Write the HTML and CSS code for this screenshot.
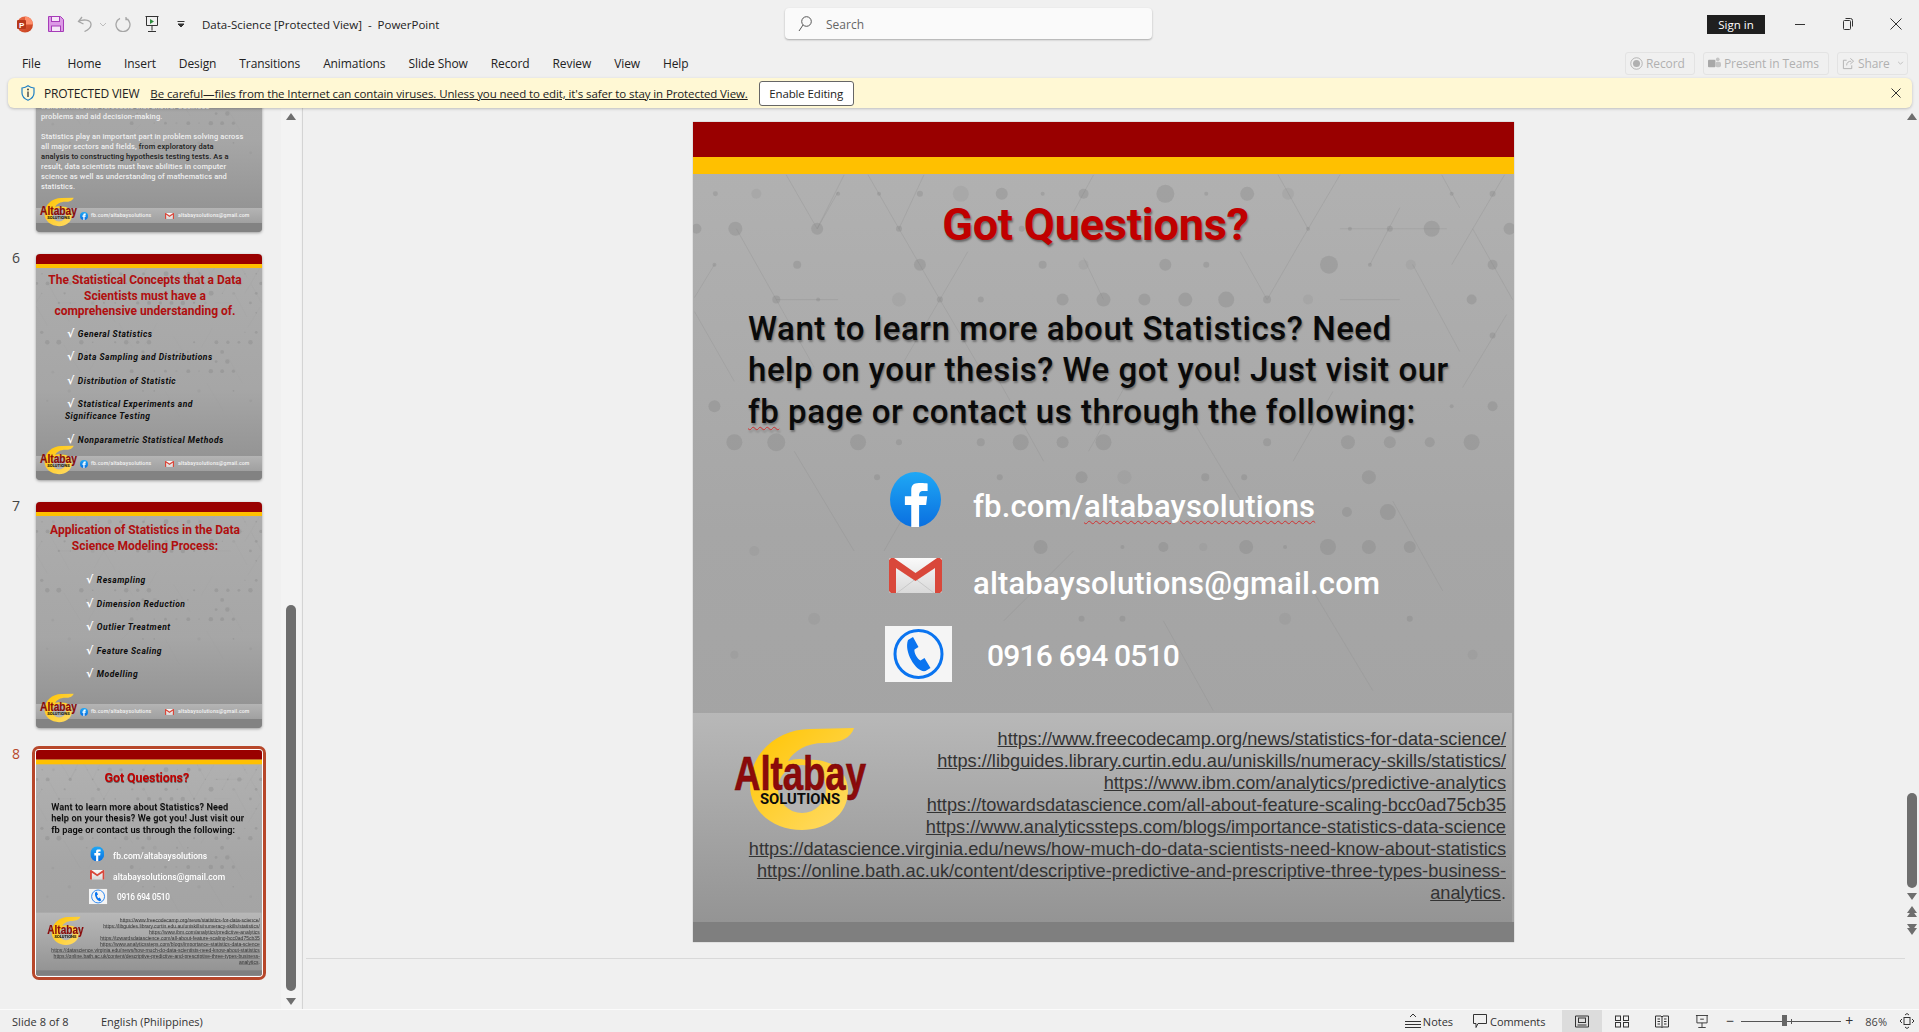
FILE: index.html
```
<!DOCTYPE html>
<html lang="en">
<head>
<meta charset="utf-8">
<title>Data-Science [Protected View] - PowerPoint</title>
<link rel="stylesheet" href="styles.css">
</head>
<body>
<svg class="defs" width="0" height="0" aria-hidden="true">
  <defs>
    <linearGradient id="fbg" x1="0" y1="0" x2="0" y2="1"><stop offset="0" stop-color="#1fa8f5"/><stop offset="1" stop-color="#0a6fe0"/></linearGradient>
    <linearGradient id="yg" x1="0" y1="0" x2="1" y2="1"><stop offset="0" stop-color="#ffc400"/><stop offset="1" stop-color="#ffdc6a"/></linearGradient>
    <linearGradient id="mailg" x1="0" y1="0" x2="0" y2="1"><stop offset="0" stop-color="#fafafa"/><stop offset="1" stop-color="#d9d9d9"/></linearGradient>
    <linearGradient id="ppg" x1="0" y1="0" x2="1" y2="1"><stop offset="0" stop-color="#ed6c47"/><stop offset="1" stop-color="#c43e1c"/></linearGradient>
    <symbol id="i-fb" viewBox="0 0 24 24" preserveAspectRatio="none">
      <circle cx="12" cy="12" r="12" fill="url(#fbg)"/>
      <path fill="#fff" d="M10 24V14.4H7v-3.8h3V8c0-3 1.9-3.2 4.5-3.2 1.3 0 2.4.1 3.2.2v3.3h-2c-1.6 0-2 .8-2 2v.3h3.8l-.5 3.8h-3.3V24z"/>
    </symbol>
    <symbol id="i-mail" viewBox="0 0 53 35" preserveAspectRatio="none">
      <rect width="53" height="35" rx="2" fill="url(#mailg)"/>
      <path d="M8 35 26.5 21 45 35" fill="none" stroke="#c8c8c8"/>
      <path fill="#d9483b" d="M0 2 2 0h3l21.500 15L48 0h3l2 2v31l-2 2h-5V10L26.500 23 7 10v25H2l-2-2z"/>
    </symbol>
    <symbol id="i-phone" viewBox="0 0 67 56">
      <rect width="67" height="56" fill="#f5f5f5"/>
      <circle cx="33.500" cy="28" r="23.500" fill="none" stroke="#0a74f0" stroke-width="3"/>
      <path fill="#0a74f0" d="M23 14l5-3 5.500 10-4 2.500c-.8 3 3 10 6 11l4-2.500 6 10-5 3c-9 2-22-19-17.500-31z"/>
    </symbol>
    <symbol id="i-logo" viewBox="0 0 160 125">
      <path fill="url(#yg)" d="M134 13c-3 10-14 15-30 15-18 0-30 8-36 18 6-2 12-3 18-1 24-2 42 10 42 31 0 24-22 39-46 39-28 0-52-18-52-45C30 38 58 14 90 14z"/>
      <ellipse cx="82" cy="74" rx="24" ry="24" fill="#b3b3b3"/>
      <text class="logo-word" x="14" y="75" textLength="132" lengthAdjust="spacingAndGlyphs">Altabay</text>
      <text class="logo-sub" x="40" y="89" textLength="80" lengthAdjust="spacingAndGlyphs">SOLUTIONS</text>
    </symbol>
    <symbol id="i-net" viewBox="0 0 820 600">
      <g class="net-lines">
        <path d="M92 53 123 107M150 53 123 107M174 53 205 107 246 178 287 248M230 53 205 107M42 107 82 178 120 246M274 130 246 178 210 240M82 178H144M144 70 123 107M390 136 410 178M400 53 380 90M585 53 615 107M647 53 604 126 574 178 547 130M749 53 767 86M812 53 759 143M720 143 767 230M647 107H754M647 178H707M677 143 707 86M780 107 820 178M814 193 770 266M0 190 40 260M20 143 0 176"/>
        <path d="M300 250 350 340M440 250 395 330M500 300 560 400M640 270 600 340M700 380 750 470M100 330 160 430M230 360 190 430M310 500 380 430M470 500 520 590M620 470 680 570"/>
      </g>
      <g class="net-dots">
        <circle cx="21" cy="72" r="2.500"/><circle cx="62" cy="72" r="5" opacity=".5"/><circle cx="144" cy="72" r="2"/><circle cx="185" cy="72" r="2"/><circle cx="226" cy="72" r="3"/><circle cx="267" cy="72" r="8" opacity=".5"/><circle cx="308" cy="72" r="6"/><circle cx="349" cy="72" r="2"/><circle cx="390" cy="72" r="5"/><circle cx="472" cy="72" r="9"/><circle cx="513" cy="72" r="2"/><circle cx="554" cy="72" r="7"/><circle cx="595" cy="72" r="6" opacity=".5"/><circle cx="759" cy="72" r="2"/><circle cx="800" cy="72" r="3"/>
        <circle cx="2" cy="107" r="5"/><circle cx="41" cy="107" r="7"/><circle cx="123" cy="107" r="6"/><circle cx="205" cy="107" r="3"/><circle cx="328" cy="107" r="3"/><circle cx="615" cy="107" r="2"/><circle cx="657" cy="107" r="2"/><circle cx="697" cy="107" r="3"/><circle cx="739" cy="107" r="8"/><circle cx="817" cy="107" r="6"/>
        <circle cx="20" cy="143" r="2"/><circle cx="103" cy="143" r="4"/><circle cx="226" cy="143" r="6"/><circle cx="349" cy="143" r="4"/><circle cx="390" cy="143" r="5" opacity=".5"/><circle cx="472" cy="143" r="6"/><circle cx="513" cy="143" r="3"/><circle cx="636" cy="143" r="9"/><circle cx="677" cy="143" r="2"/><circle cx="718" cy="143" r="5" opacity=".5"/><circle cx="800" cy="143" r="5"/>
        <circle cx="82" cy="178" r="4"/><circle cx="124" cy="178" r="2"/><circle cx="205" cy="178" r="7" opacity=".5"/><circle cx="246" cy="178" r="3"/><circle cx="287" cy="178" r="3"/><circle cx="369" cy="178" r="6"/><circle cx="410" cy="178" r="7"/><circle cx="451" cy="178" r="6"/><circle cx="492" cy="178" r="7"/><circle cx="533" cy="178" r="8"/><circle cx="574" cy="178" r="4"/><circle cx="615" cy="178" r="5" opacity=".5"/><circle cx="779" cy="178" r="5"/>
        <circle cx="20" cy="285" r="6"/><circle cx="759" cy="285" r="2"/><circle cx="800" cy="285" r="5"/><circle cx="800" cy="214" r="3"/>
        <circle cx="40" cy="321" r="8"/><circle cx="82" cy="321" r="9"/><circle cx="164" cy="321" r="8"/><circle cx="205" cy="321" r="3"/><circle cx="287" cy="321" r="4"/><circle cx="327" cy="321" r="8"/><circle cx="369" cy="321" r="6"/><circle cx="410" cy="321" r="8"/><circle cx="574" cy="321" r="4"/><circle cx="655" cy="321" r="7"/><circle cx="697" cy="321" r="6"/><circle cx="737" cy="321" r="5"/><circle cx="779" cy="321" r="8"/>
        <circle cx="183" cy="356" r="3"/><circle cx="306" cy="356" r="3"/><circle cx="388" cy="356" r="6"/><circle cx="431" cy="356" r="7" opacity=".5"/><circle cx="512" cy="356" r="4"/><circle cx="551" cy="356" r="3"/><circle cx="676" cy="356" r="7"/>
        <circle cx="367" cy="391" r="3"/><circle cx="654" cy="391" r="5"/><circle cx="695" cy="391" r="8"/>
        <circle cx="347" cy="426" r="7"/><circle cx="429" cy="426" r="2"/><circle cx="470" cy="426" r="5"/><circle cx="510" cy="426" r="4" opacity=".5"/><circle cx="553" cy="426" r="7"/><circle cx="592" cy="426" r="2"/><circle cx="635" cy="426" r="8"/><circle cx="676" cy="426" r="7"/><circle cx="717" cy="426" r="6"/>
        <circle cx="388" cy="498" r="3"/><circle cx="429" cy="498" r="3"/><circle cx="592" cy="498" r="6" opacity=".5"/><circle cx="717" cy="498" r="3"/><circle cx="60" cy="430" r="5" opacity=".5"/><circle cx="120" cy="498" r="6" opacity=".5"/><circle cx="40" cy="534" r="4" opacity=".5"/><circle cx="780" cy="534" r="5" opacity=".5"/>
      </g>
    </symbol>
  </defs>
</svg>

<div class="app">
  <header class="titlebar">
    <div class="qat">
      <svg class="ic-app" viewBox="0 0 17 17"><circle cx="9" cy="8.500" r="8" fill="url(#ppg)"/><path d="M9 .5a8 8 0 0 1 8 8H9z" fill="#ff8f6b"/><rect x="1" y="4" width="9" height="9" rx="1" fill="#b7381a"/><text class="ic-app-p" x="3" y="11.500">P</text></svg>
      <svg class="ic-save" viewBox="0 0 16 16"><path d="M.5.5h12l3 3v12H.5z" fill="#dc9ae6" stroke="#a63cb8"/><rect x="3.500" y=".5" width="8" height="5" fill="#f6e7f8" stroke="#a63cb8"/><rect x="3.500" y="10" width="9" height="5.500" fill="#f6e7f8" stroke="#a63cb8"/></svg>
      <svg class="ic-undo" viewBox="0 0 16 16" fill="none" stroke="#a6a6a6" stroke-width="1.300"><path d="M5 1 1.500 5.500 6.500 8"/><path d="M1.500 5.500C6 3 13.500 3.500 14 8c.3 3-3 6-6.500 7.500"/></svg>
      <svg class="ic-chev" viewBox="0 0 8 5" fill="none" stroke="#bdbdbd"><path d="m1 1 3 3 3-3"/></svg>
      <svg class="ic-redo" viewBox="0 0 16 16" fill="none" stroke="#a6a6a6" stroke-width="1.300"><path d="M11 2.300a7 7 0 1 1-6 0M11 1v2.500h2.500"/></svg>
      <svg class="ic-pres" viewBox="0 0 14 16" fill="none" stroke="#333"><path d="M.5.500h13M1.500.5v9h11v-9M7 9.500v5M3 15.500h8"/><path d="M5 3v5l4-2.500z" fill="#2e8b3d" stroke="none"/></svg>
      <svg class="ic-cust" viewBox="0 0 8 7" fill="none" stroke="#333"><path d="M.5.500h7M1 3l3 3 3-3z" fill="#333"/></svg>
      <span class="doc-title">Data-Science [Protected View]&nbsp; -&nbsp; PowerPoint</span>
    </div>
    <div class="searchbox">
      <svg class="ic-search" viewBox="0 0 14 16" fill="none" stroke="#555"><circle cx="8.500" cy="5.500" r="4.800"/><path d="M5 9 1 15"/></svg>
      <span>Search</span>
    </div>
    <div class="winctl">
      <span class="signin">Sign in</span>
      <svg class="w-btn w-min" viewBox="0 0 10 10" stroke="#333"><path d="M0 5.500h10"/></svg>
      <svg class="w-btn w-res" viewBox="0 0 10 12" fill="none" stroke="#333"><rect x=".5" y="2.500" width="7" height="9" rx="1"/><path d="M2.500.5h5a2 2 0 0 1 2 2v6"/></svg>
      <svg class="w-btn w-close" viewBox="0 0 12 12" fill="none" stroke="#333"><path d="m.5.500 11 11M11.500.5l-11 11"/></svg>
    </div>
  </header>

  <nav class="tabs">
    <span class="tab tab-file">File</span>
    <span class="tab">Home</span>
    <span class="tab">Insert</span>
    <span class="tab">Design</span>
    <span class="tab">Transitions</span>
    <span class="tab">Animations</span>
    <span class="tab">Slide Show</span>
    <span class="tab">Record</span>
    <span class="tab">Review</span>
    <span class="tab">View</span>
    <span class="tab">Help</span>
    <div class="tab-actions">
      <span class="act act-rec"><svg class="act-ic" viewBox="0 0 14 14"><circle cx="7" cy="7" r="6.200" fill="none" stroke="#b0b0b0"/><circle cx="7" cy="7" r="3.800" fill="#b0b0b0"/></svg>Record</span>
      <span class="act act-team"><svg class="act-ic" viewBox="0 0 14 14"><rect x="0" y="3" width="8" height="8" rx="1" fill="#a8a8a8"/><rect x="8" y="5" width="6" height="6" rx="2" fill="#c4c4c4"/><circle cx="10.500" cy="2.500" r="2" fill="#c4c4c4"/></svg>Present in Teams</span>
      <span class="act act-share"><svg class="act-ic" viewBox="0 0 14 14" fill="none" stroke="#b0b0b0"><path d="M5 3.500H1.500v9h9V9M5 9c0-3 2-4.500 5-4.500M9 1.500l3.500 3-3.500 3"/></svg>Share<svg class="act-chev" viewBox="0 0 8 5" fill="none" stroke="#b5b5b5"><path d="m1 1 3 3 3-3"/></svg></span>
    </div>
  </nav>

  <div class="msgbar">
    <svg class="ic-shield" viewBox="0 0 14 16" fill="none"><path d="M7 .8c2 1.500 4 2 6 2.200v5c0 3.500-2.500 5.800-6 7.200-3.500-1.400-6-3.700-6-7.200V3c2-.2 4-.7 6-2.200z" stroke="#1f7fc4" stroke-width="1.200"/><path d="M7 6.500V12" stroke="#333" stroke-width="1.300"/><circle cx="7" cy="4.500" r=".9" fill="#333"/></svg>
    <b class="msg-head">PROTECTED VIEW</b>
    <span class="msg-text">Be careful—files from the Internet can contain viruses. Unless you need to edit, it's safer to stay in Protected View.</span>
    <span class="msg-btn">Enable Editing</span>
    <svg class="msg-close" viewBox="0 0 10 10" fill="none" stroke="#333"><path d="m.5.500 9 9M9.500.5l-9 9"/></svg>
  </div>

  <main class="workspace">
    <aside class="thumbpanel">
      <div class="thumblist">
        <div class="thumbrow">
          <span class="thumbnum"></span>
          <div class="thumb thumb-end">
            <svg class="net"><use href="#i-net"/></svg>
            <div class="t5-text">
              <p class="t5-par">transformed into forecasts that answer business<br>problems and aid decision-making.</p>
              <p class="t5-par">Statistics play an important part in problem solving across<br>all major sectors and fields, <span class="t5-dark">from exploratory data<br>analysis to constructing hypothesis testing tests. As a<br></span>result, data scientists must have abilities in computer<br>science as well as understanding of mathematics and<br>statistics.</p>
            </div>
            <div class="t-foot">
              <svg class="t-logo"><use href="#i-logo"/></svg>
              <div class="t-strip"><svg class="t-fb"><use href="#i-fb"/></svg><span class="t-fbtext">fb.com/altabaysolutions</span><svg class="t-mail"><use href="#i-mail"/></svg><span>altabaysolutions@gmail.com</span></div>
            </div>
          </div>
        </div>
        <div class="thumbrow">
          <span class="thumbnum">6</span>
          <div class="thumb">
            <svg class="net"><use href="#i-net"/></svg>
            <div class="t-band"></div><div class="t-yellow"></div>
            <h3 class="t-title t6-title">The Statistical Concepts that a Data<br>Scientists must have a<br>comprehensive understanding of.</h3>
            <ul class="t-list t6-list">
              <li><i>√</i>General Statistics</li>
              <li><i>√</i>Data Sampling and Distributions</li>
              <li><i>√</i>Distribution of Statistic</li>
              <li class="t6-two"><i>√</i>Statistical Experiments and<br><span class="t6-out">Significance Testing</span></li>
              <li><i>√</i>Nonparametric Statistical Methods</li>
            </ul>
            <div class="t-foot">
              <svg class="t-logo"><use href="#i-logo"/></svg>
              <div class="t-strip"><svg class="t-fb"><use href="#i-fb"/></svg><span class="t-fbtext">fb.com/altabaysolutions</span><svg class="t-mail"><use href="#i-mail"/></svg><span>altabaysolutions@gmail.com</span></div>
            </div>
          </div>
        </div>
        <div class="thumbrow">
          <span class="thumbnum">7</span>
          <div class="thumb">
            <svg class="net"><use href="#i-net"/></svg>
            <div class="t-band"></div><div class="t-yellow"></div>
            <h3 class="t-title t7-title">Application of Statistics in the Data<br>Science Modeling Process:</h3>
            <ul class="t-list t7-list">
              <li><i>√</i>Resampling</li>
              <li><i>√</i>Dimension Reduction</li>
              <li><i>√</i>Outlier Treatment</li>
              <li><i>√</i>Feature Scaling</li>
              <li><i>√</i>Modelling</li>
            </ul>
            <div class="t-foot">
              <svg class="t-logo"><use href="#i-logo"/></svg>
              <div class="t-strip"><svg class="t-fb"><use href="#i-fb"/></svg><span class="t-fbtext">fb.com/altabaysolutions</span><svg class="t-mail"><use href="#i-mail"/></svg><span>altabaysolutions@gmail.com</span></div>
            </div>
          </div>
        </div>
        <div class="thumbrow">
          <span class="thumbnum thumbnum-on">8</span>
          <div class="thumb thumb-on">
            <div class="slide slide-mini">
              <svg class="net"><use href="#i-net"/></svg>
              <div class="s-band"></div><div class="s-yellow"></div>
              <h2 class="s-title">Got Questions?</h2>
              <p class="s-body">Want to learn more about Statistics? Need<br>help on your thesis? We got you! Just visit our<br>fb page or contact us through the following:</p>
              <div class="c-row c-row1"><svg class="c-fb"><use href="#i-fb"/></svg><span class="c-text">fb.com/altabaysolutions</span></div>
              <div class="c-row c-row2"><svg class="c-mail"><use href="#i-mail"/></svg><span class="c-text">altabaysolutions@gmail.com</span></div>
              <div class="c-row c-row3"><svg class="c-phone"><use href="#i-phone"/></svg><span class="c-text c-num">0916 694 0510</span></div>
              <div class="s-foot">
                <svg class="s-logo"><use href="#i-logo"/></svg>
                <p class="s-links"><a>https://www.freecodecamp.org/news/statistics-for-data-science/</a><br><a>https://libguides.library.curtin.edu.au/uniskills/numeracy-skills/statistics/</a><br><a>https://www.ibm.com/analytics/predictive-analytics</a><br><a>https://towardsdatascience.com/all-about-feature-scaling-bcc0ad75cb35</a><br><a>https://www.analyticssteps.com/blogs/importance-statistics-data-science</a><br><a>https://datascience.virginia.edu/news/how-much-do-data-scientists-need-know-about-statistics</a><br><a>https://online.bath.ac.uk/content/descriptive-predictive-and-prescriptive-three-types-business-<br>analytics</a>.</p>
              </div>
              <div class="s-bottom"></div>
            </div>
          </div>
        </div>
      </div>
      <div class="thumbscroll">
        <span class="arr arr-up"></span>
        <span class="sb-thumb sb-thumb-left"></span>
        <span class="arr arr-down"></span>
      </div>
    </aside>

    <section class="editor">
      <div class="canvas">
        <article class="slide">
          <svg class="net"><use href="#i-net"/></svg>
          <div class="s-band"></div><div class="s-yellow"></div>
          <h1 class="s-title">Got Questions?</h1>
          <p class="s-body">Want to learn more about Statistics? Need<br>help on your thesis? We got you! Just visit our<br><span class="squig">fb</span> page or contact us through the following:</p>
          <div class="c-row c-row1"><svg class="c-fb"><use href="#i-fb"/></svg><span class="c-text">fb.com/<span class="squig">altabaysolutions</span></span></div>
          <div class="c-row c-row2"><svg class="c-mail"><use href="#i-mail"/></svg><span class="c-text">altabaysolutions@gmail.com</span></div>
          <div class="c-row c-row3"><svg class="c-phone"><use href="#i-phone"/></svg><span class="c-text c-num">0916 694 0510</span></div>
          <div class="s-foot">
            <svg class="s-logo"><use href="#i-logo"/></svg>
            <p class="s-links"><a>https://www.freecodecamp.org/news/statistics-for-data-science/</a><br><a>https://libguides.library.curtin.edu.au/uniskills/numeracy-skills/statistics/</a><br><a>https://www.ibm.com/analytics/predictive-analytics</a><br><a>https://towardsdatascience.com/all-about-feature-scaling-bcc0ad75cb35</a><br><a>https://www.analyticssteps.com/blogs/importance-statistics-data-science</a><br><a>https://datascience.virginia.edu/news/how-much-do-data-scientists-need-know-about-statistics</a><br><a>https://online.bath.ac.uk/content/descriptive-predictive-and-prescriptive-three-types-business-<br>analytics</a>.</p>
          </div>
          <div class="s-bottom"></div>
        </article>
      </div>
      <div class="mainscroll">
        <span class="arr arr-up"></span>
        <span class="sb-thumb sb-thumb-right"></span>
        <span class="arr arr-down arr-d1"></span>
        <span class="arr arr-up arr-d2"></span><span class="arr arr-up arr-d3"></span>
        <span class="arr arr-down arr-d4"></span><span class="arr arr-down arr-d3"></span>
      </div>
    </section>
  </main>

  <footer class="statusbar">
    <span class="st-slide">Slide 8 of 8</span>
    <span class="st-lang">English (Philippines)</span>
    <div class="st-right">
      <span class="st-item st-notes"><svg class="st-ic-notes" viewBox="0 0 16 16" fill="none" stroke="#333"><path d="m5 4 3-3 3 3M0 8.500h16M0 11.500h16M0 14.500h16"/></svg>Notes</span>
      <span class="st-item st-comments"><svg class="st-ic-com" viewBox="0 0 14 14" fill="none" stroke="#333"><path d="M.5.5h13v9H5l-2 4v-4H.5z"/></svg>Comments</span>
      <span class="view view-on"><svg viewBox="0 0 14 12" fill="none" stroke="#333"><path d="M.5.5h13v11H.5zM2.500 9.500h9"/><rect x="3.500" y="2.500" width="7" height="4.500"/></svg></span>
      <span class="view"><svg viewBox="0 0 14 12" fill="none" stroke="#333"><rect x=".5" y=".5" width="5" height="4.500"/><rect x="8.500" y=".5" width="5" height="4.500"/><rect x=".5" y="7" width="5" height="4.500"/><rect x="8.500" y="7" width="5" height="4.500"/></svg></span>
      <span class="view"><svg viewBox="0 0 14 12" fill="none" stroke="#333"><path d="M.5.5h5.500l1 1 1-1h5.500v11H8l-1 .5-1-.5H.5zM7 1.500v10M2.500 3.500h2.500M2.500 6h2.500M2.500 8.500h2.500M9 3.500h2.500M9 6h2.500M9 8.500h2.500"/></svg></span>
      <span class="view"><svg viewBox="0 0 14 14" fill="none" stroke="#333"><path d="M.5.500h13M1.500.5v8h11v-8M7 8.500v4.500M3 13.500h8M5 4.500h4"/></svg></span>
      <div class="zoomctl">
        <span class="z-sign">−</span>
        <div class="z-track"><span class="z-knob"></span><span class="z-tick"></span></div>
        <span class="z-sign">+</span>
        <span class="z-val">86%</span>
        <svg class="z-fit" viewBox="0 0 16 16" fill="none" stroke="#333"><rect x="5" y="4.500" width="6" height="7"/><path d="m6 2 2-1.500L10 2M6 14l2 1.500 2-1.500M3 6 1 8l2 2M13 6l2 2-2 2"/></svg>
      </div>
    </div>
  </footer>
</div>
</body>
</html>
```
FILE: styles.css
```
* { box-sizing: border-box; }
html, body { margin: 0; height: 100%; overflow: hidden; background: #f0f0f0; }
body { font-family: "Open Sans", "Noto Sans", sans-serif; font-size: 12px; color: #333; }
.defs { position: absolute; }
.app { display: flex; flex-direction: column; width: 1919px; height: 1032px; }
svg { display: block; flex: none; }

/* title bar */
.titlebar { height: 48px; display: flex; align-items: center; position: relative; flex: none; }
.qat { display: flex; align-items: center; padding-left: 16px; }
.ic-app { width: 17px; height: 17px; margin-right: 15px; }
.ic-app-p { font: 700 8px "Liberation Sans", sans-serif; fill: #fff; }
.ic-save { width: 16px; height: 16px; margin-right: 13px; }
.ic-undo { width: 16px; height: 16px; margin-right: 6px; }
.ic-chev { width: 8px; height: 5px; margin-right: 8px; }
.ic-redo { width: 16px; height: 16px; margin-right: 14px; }
.ic-pres { width: 14px; height: 16px; margin-right: 18px; }
.ic-cust { width: 8px; height: 7px; margin-right: 17px; }
.doc-title { font-size: 11.500px; color: #222; }
.searchbox { position: absolute; left: 785px; top: 8px; width: 367px; height: 31px; background: #fafafa; border-radius: 4px; box-shadow: 0 1px 2px rgba(0,0,0,.3); display: flex; align-items: center; padding: 1px 0 0 13px; gap: 14px; color: #666; font-size: 12px; }
.ic-search { width: 14px; height: 16px; }
.winctl { margin-left: auto; display: flex; align-items: center; }
.signin { width: 58px; height: 19px; background: #1f1f1f; color: #fff; font-size: 11.500px; display: flex; align-items: center; justify-content: center; margin-right: 30px; }
.w-btn { width: 10px; height: 12px; }
.w-min { margin-right: 38px; }
.w-res { margin-right: 37px; }
.w-close { width: 12px; height: 12px; margin-right: 17px; }

/* tabs */
.tabs { height: 30px; display: flex; align-items: center; padding-left: 22px; gap: 23px; flex: none; font-size: 12px; color: #222; letter-spacing: -.1px; }
.tab-file { margin-right: 4px; }
.tab-actions { margin-left: auto; display: flex; gap: 8px; padding-right: 11px; color: #b0b0b0; }
.act { height: 23px; border: 1px solid #e3e3e3; border-radius: 3px; display: flex; align-items: center; gap: 3px; padding: 0 4px; }
.act-rec { width: 70px; }
.act-team { width: 126px; }
.act-share { width: 71px; }
.act-ic { width: 13px; height: 13px; }
.act-chev { width: 7px; height: 4px; margin-left: 4px; }

/* message bar */
.msgbar { height: 30px; margin: 0 7px 0 8px; background: #fff8d4; border-radius: 6px; box-shadow: 0 1px 3px rgba(0,0,0,.22); display: flex; align-items: center; padding-left: 13px; position: relative; z-index: 2; flex: none; color: #222; }
.ic-shield { width: 14px; height: 16px; margin-right: 9px; }
.msg-head { font-weight: 400; font-size: 12px; letter-spacing: -.2px; margin-right: 11px; }
.msg-text { font-size: 11.500px; text-decoration: underline; letter-spacing: -.1px; margin-right: 11px; }
.msg-btn { width: 95px; height: 25px; border: 1px solid #666; border-radius: 3px; background: #fff; display: flex; align-items: center; justify-content: center; font-size: 11.500px; letter-spacing: -.15px; }
.msg-close { width: 10px; height: 10px; margin-left: auto; margin-right: 11px; }

/* workspace */
.workspace { flex: 1; display: flex; min-height: 0; }
.thumbpanel { width: 303px; display: flex; border-right: 1px solid #d4d4d4; overflow: hidden; flex: none; }
.thumblist { width: 281px; margin-top: -102px; display: flex; flex-direction: column; gap: 22px; }
.thumbrow { display: flex; flex: none; height: 226px; }
.thumbnum { width: 36px; padding: 0 0 0 12px; margin-top: -6px; font-size: 14px; line-height: 20px; color: #444; }
.thumbnum-on { color: #b7472a; }
.thumb { width: 226px; height: 226px; border-radius: 4px; overflow: hidden; position: relative; display: flex; flex-direction: column; background: linear-gradient(#adadad, #a6a6a6 60%, #8e8e8e); box-shadow: 0 1px 3px rgba(0,0,0,.35); }
.thumb-end { justify-content: flex-end; }
.thumb-on { overflow: visible; box-shadow: 0 0 0 1px #fff, 0 0 0 4px #b7472a; border-radius: 3px; }
.net { position: absolute; left: 0; top: 0; width: 100%; height: 73%; }
.net-lines path { stroke: #8c8c8c; stroke-opacity: .3; fill: none; }
.net-dots { fill: #7e7e7e; fill-opacity: .3; }
.t-band { height: 10px; background: #990000; flex: none; position: relative; }
.t-yellow { height: 4px; background: #ffc000; flex: none; position: relative; }
.t-title { position: relative; margin: 6px 0 0; font: 700 12px/15.500px Roboto, sans-serif; color: #b00f0f; text-align: center; padding-right: 8px; }
.t6-title { margin-top: 5px; }
.t7-title { margin-top: 7px; }
.t-list { position: relative; list-style: none; margin: 0; padding: 0; font: italic 700 8.500px/11px Roboto, sans-serif; color: #0c0c0c; letter-spacing: .5px; }
.t-list i { color: #fff; font-style: normal; font-weight: 700; font-size: 11px; margin-right: 3px; font-family: "DejaVu Sans", sans-serif; }
.t6-list { padding-left: 31px; margin-top: 8px; display: flex; flex-direction: column; gap: 11.500px; }
.t6-two { line-height: 12px; }
.t6-out { margin-left: -2px; }
.t7-list { padding-left: 50px; margin-top: 20px; display: flex; flex-direction: column; gap: 11.500px; }
.t5-text { position: relative; font: 500 7.500px/10px Roboto, sans-serif; color: #efefef; letter-spacing: .12px; padding-left: 5px; margin-bottom: 16px; }
.t5-par { margin: 0 0 10px; }
.t5-par:last-child { margin-bottom: 0; }
.t5-dark { color: #202020; }
.t-foot { margin-top: auto; height: 24px; flex: none; background: #828282; position: relative; }
.t-strip { height: 15px; background: linear-gradient(#b4b4b4, #a0a0a0); display: flex; align-items: center; padding-left: 44px; font: 500 5.200px/1 Roboto, sans-serif; color: #f4f4f4; letter-spacing: .16px; }
.t-logo { position: absolute; left: 0; top: -14px; width: 45px; height: 35px; }
.t-fb { width: 8px; height: 8px; margin-right: 3px; position: relative; }
.t-fbtext { width: 74px; }
.t-mail { width: 9px; height: 6px; margin-right: 4px; }
.thumb-end .t-foot { margin-top: 0; }

/* slide */
.editor { flex: 1; display: flex; min-width: 0; }
.canvas { flex: 1; height: 851px; margin-left: 3px; border-bottom: 1px solid #d9d9d9; padding: 14px 0 0 387px; }
.slide { width: 821px; height: 820px; position: relative; display: flex; flex-direction: column; background: linear-gradient(#b2b2b2, #a6a6a6 50%, #a2a2a2); font-family: Roboto, sans-serif; box-shadow: 0 0 1px rgba(0,0,0,.4); flex: none; }
.slide-mini { transform: scale(.2753); transform-origin: 0 0; border-radius: 12px; overflow: hidden; }
.s-band { height: 35px; background: #990000; position: relative; flex: none; }
.s-yellow { height: 17px; background: #ffc000; position: relative; flex: none; }
.s-title { position: relative; margin: 24px 0 0; font: 700 45px/54px Roboto, sans-serif; color: #c00000; text-align: center; padding-right: 16px; text-shadow: 1px 2px 2px rgba(0,0,0,.4); letter-spacing: -.2px; }
.s-body { position: relative; margin: 56px 0 0; padding-left: 55px; font: 500 33px/41.300px Roboto, sans-serif; color: #0a0a0a; text-shadow: 1px 2px 2px rgba(0,0,0,.35); white-space: nowrap; letter-spacing: .55px; }
.squig { text-decoration: underline wavy #d03030 1px; text-underline-offset: 3px; }
.c-row { position: relative; display: flex; flex: none; color: #fff; font: 500 31px/40px Roboto, sans-serif; letter-spacing: .17px; }
.c-row1 { margin-top: 40px; padding-left: 197px; height: 55px; }
.c-row2 { margin-top: 31px; padding-left: 196px; height: 37px; }
.c-row3 { margin-top: 31px; padding-left: 192px; height: 56px; }
.c-fb { width: 51px; height: 55px; margin-right: 32px; }
.c-mail { width: 53px; height: 35px; margin-right: 31px; }
.c-phone { width: 67px; height: 56px; margin-right: 35px; }
.c-text { margin-top: 15px; }
.c-row2 .c-text { margin-top: 6px; }
.c-row3 .c-num { margin-top: 10px; font-size: 30px; letter-spacing: -.8px; }
.s-foot { position: absolute; left: 0; right: 2px; top: 591px; height: 209px; background: linear-gradient(#b8b8b8, #949494); padding: 15px 6px 0 0; }
.s-logo { position: absolute; left: 27px; top: 2px; width: 160px; height: 125px; }
.s-links { position: relative; margin: 0; text-align: right; font: 18.200px/22px "Liberation Sans", Arial, sans-serif; color: #333; }
.s-links a { text-decoration: underline; }
.s-bottom { position: absolute; left: 0; right: 0; bottom: 0; height: 20px; background: #7f7f7f; }
.logo-word { font: 700 48px "Liberation Sans", sans-serif; fill: #8c0a0a; stroke: #6d0505; stroke-width: .6px; }
.logo-sub { font: 700 14px Roboto, sans-serif; fill: #0b0b0b; }

/* scrollbars */
.thumbscroll { width: 20px; display: flex; flex-direction: column; align-items: center; flex: none; padding-top: 5px; background: #f3f3f3; }
.mainscroll { width: 14px; flex: none; display: flex; flex-direction: column; align-items: center; padding: 5px 0 0 0; margin-right: 0; }
.arr { width: 0; height: 0; border-left: 5px solid transparent; border-right: 5px solid transparent; flex: none; }
.arr-up { border-bottom: 7px solid #6e6e6e; }
.arr-down { border-top: 7px solid #6e6e6e; }
.sb-thumb { width: 10px; background: #6e6e6e; border-radius: 5px; flex: none; }
.sb-thumb-left { height: 386px; margin: 485px 0 7px; }
.sb-thumb-right { height: 95px; margin: 673px 0 5px; }
.arr-d1 { margin-bottom: 6px; }
.arr-d3 { margin-top: -3px; }
.arr-d4 { margin-top: 7px; }

/* status bar */
.statusbar { height: 23px; flex: none; border-top: 1px solid #fbfbfb; display: flex; align-items: center; padding-left: 12px; font-size: 11px; color: #333; }
.st-slide { width: 89px; letter-spacing: .05px; }
.st-right { margin-left: auto; display: flex; align-items: center; height: 100%; }
.st-item { display: flex; align-items: center; gap: 2px; }
.st-notes { margin-right: 20px; }
.st-comments { margin-right: 17px; gap: 3px; letter-spacing: -.1px; }
.st-ic-notes { width: 16px; height: 16px; }
.st-ic-com { width: 14px; height: 14px; }
.view { width: 40px; height: 100%; display: flex; align-items: center; justify-content: center; }
.view svg { width: 14px; height: 13px; }
.view-on { background: #dcdcdc; }
.zoomctl { display: flex; align-items: center; margin-left: 1px; padding-right: 4px; }
.z-sign { width: 14px; text-align: center; font-size: 14px; line-height: 14px; }
.z-track { width: 100px; height: 1px; background: #555; position: relative; margin: 0 1px 0 4px; }
.z-knob { position: absolute; left: 41px; top: -6px; width: 5px; height: 11px; background: #666; }
.z-tick { position: absolute; left: 50px; top: -2px; width: 1px; height: 5px; background: #555; }
.z-val { margin: 0 12px 0 9px; color: #444; }
.z-fit { width: 16px; height: 16px; }
```
